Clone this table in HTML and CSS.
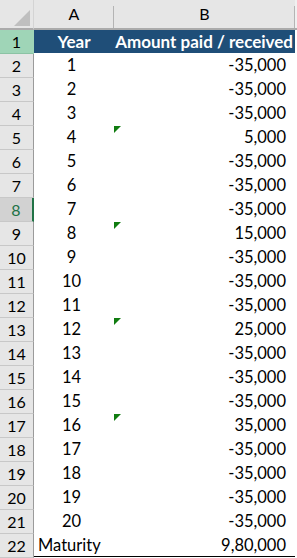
FILE: index.html
```html
<!DOCTYPE html>
<html>
<head>
<meta charset="utf-8">
<link rel="stylesheet" href="styles.css">
</head>
<body>
<div class="sheet">
  <div class="row head">
    <div class="corner"><svg class="tri" width="17" height="17" viewBox="0 0 17 17"><polygon points="16,0 16,16 0,16" fill="#bfbfbf"/></svg></div>
    <div class="ch">A</div>
    <div class="ch">B</div>
    <div class="ch tail"></div>
  </div>
  <div class="row">
    <div class="rh sel">1</div>
    <div class="c a title">Year</div>
    <div class="c b title">Amount paid / received</div>
  </div>
  <div class="row"><div class="rh">2</div><div class="c a">1</div><div class="c b">-35,000</div></div>
  <div class="row"><div class="rh">3</div><div class="c a">2</div><div class="c b">-35,000</div></div>
  <div class="row"><div class="rh">4</div><div class="c a">3</div><div class="c b">-35,000</div></div>
  <div class="row"><div class="rh">5</div><div class="c a">4</div><div class="c b err">5,000</div></div>
  <div class="row"><div class="rh">6</div><div class="c a">5</div><div class="c b">-35,000</div></div>
  <div class="row"><div class="rh">7</div><div class="c a">6</div><div class="c b">-35,000</div></div>
  <div class="row"><div class="rh active">8</div><div class="c a">7</div><div class="c b">-35,000</div></div>
  <div class="row"><div class="rh">9</div><div class="c a">8</div><div class="c b err">15,000</div></div>
  <div class="row"><div class="rh">10</div><div class="c a">9</div><div class="c b">-35,000</div></div>
  <div class="row"><div class="rh">11</div><div class="c a">10</div><div class="c b">-35,000</div></div>
  <div class="row"><div class="rh">12</div><div class="c a">11</div><div class="c b">-35,000</div></div>
  <div class="row"><div class="rh">13</div><div class="c a">12</div><div class="c b err">25,000</div></div>
  <div class="row"><div class="rh">14</div><div class="c a">13</div><div class="c b">-35,000</div></div>
  <div class="row"><div class="rh">15</div><div class="c a">14</div><div class="c b">-35,000</div></div>
  <div class="row"><div class="rh">16</div><div class="c a">15</div><div class="c b">-35,000</div></div>
  <div class="row"><div class="rh">17</div><div class="c a">16</div><div class="c b err">35,000</div></div>
  <div class="row"><div class="rh">18</div><div class="c a">17</div><div class="c b">-35,000</div></div>
  <div class="row"><div class="rh">19</div><div class="c a">18</div><div class="c b">-35,000</div></div>
  <div class="row"><div class="rh">20</div><div class="c a">19</div><div class="c b">-35,000</div></div>
  <div class="row"><div class="rh">21</div><div class="c a">20</div><div class="c b">-35,000</div></div>
  <div class="row last"><div class="rh">22</div><div class="c a text">Maturity</div><div class="c b">9,80,000</div></div>
</div>
</body>
</html>
```

FILE: styles.css
```css
* { box-sizing: border-box; }
html, body { margin: 0; padding: 0; background: #ffffff; }
body {
  font-family: Lato, "Open Sans", "Liberation Sans", sans-serif;
  color: #000;
  width: 297px;
  height: 558px;
  overflow: hidden;
}
.sheet { display: flex; flex-direction: column; }
.row {
  display: grid;
  grid-template-columns: 34px 80px 181px 2px;
  height: 24px;
}
.head { height: 30px; }
.corner {
  position: relative;
  background: #e6e6e6;
  border-right: 1px solid #d4d4d4;
  border-bottom: 2px solid #ababab;
}
.tri { position: absolute; left: 14px; top: 10px; }
.ch {
  background: linear-gradient(#b4b4b4, #b4b4b4) right bottom / 1px 22px no-repeat, #e6e6e6;
  border-bottom: 2px solid #ababab;
  font-size: 16px;
  text-align: center;
  line-height: 28px;
}
.ch.tail { background: #f0f0f0; }
.rh {
  background: #e6e6e6;
  border-right: 1px solid #9b9b9b;
  border-bottom: 1px solid #c8c8c8;
  font-size: 16px;
  text-align: center;
  line-height: 23px;
}
.rh.sel { background: #9fd5b7; border-right-color: #9fd5b7; border-bottom-color: #8cc3a4; }
.rh.active {
  background: #d2d2d2;
  color: #217346;
  border-right: 2px solid #217346;
}
.c {
  font-size: 16.5px;
  line-height: 23px;
  white-space: nowrap;
}
.a { text-align: center; padding-right: 5px; }
.a.text { text-align: left; padding-left: 4px; padding-right: 0; }
.b { text-align: right; padding-right: 9px; position: relative; }
.title {
  background: #1f4e78;
  color: #ffffff;
  font-weight: 700;
  font-size: 17px;
  height: 23px;
}
.a.title { padding-right: 0; }
.b.title { padding-right: 2px; }
.err::before {
  content: "";
  position: absolute;
  left: 0;
  top: 0;
  border-top: 7px solid #107c10;
  border-right: 7px solid transparent;
}
.last .c { height: 23px; border-bottom: 1px solid #000; line-height: 22px; }
```
